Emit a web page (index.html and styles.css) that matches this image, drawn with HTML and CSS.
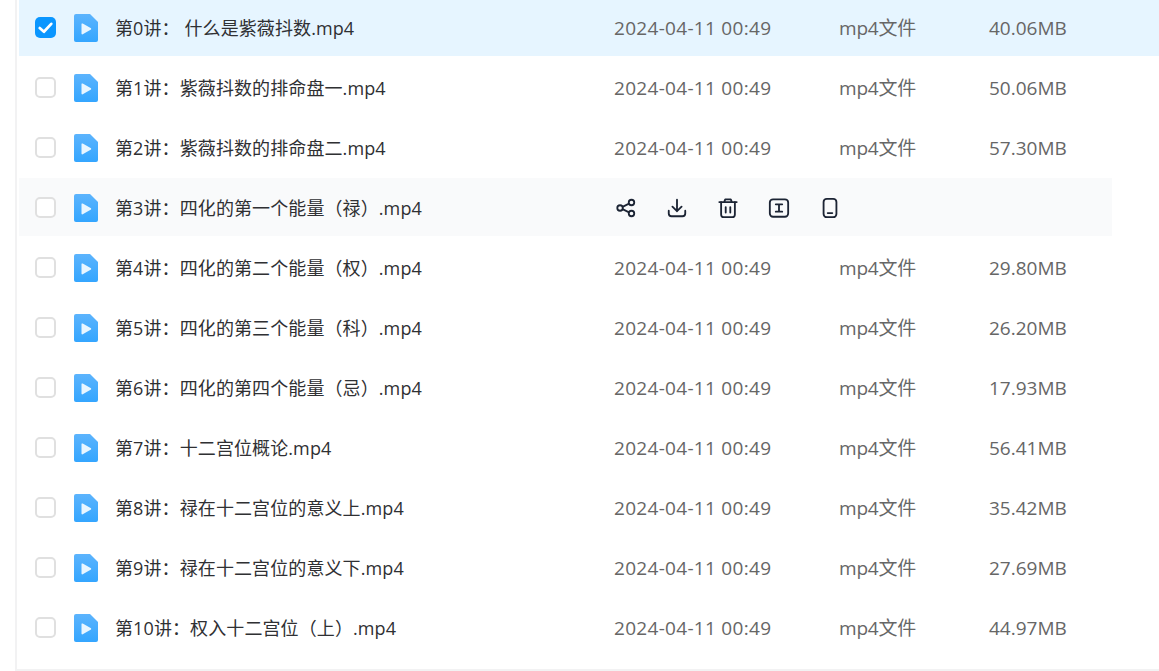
FILE: index.html
```html
<!DOCTYPE html>
<html lang="zh">
<head>
<meta charset="utf-8">
<title>文件列表</title>
<link rel="stylesheet" href="styles.css">
</head>
<body>
<svg class="defs" width="0" height="0" aria-hidden="true">
  <defs>
    <linearGradient id="fg" x1="0" y1="0" x2="0" y2="1">
      <stop offset="0" stop-color="#5cb4fd"/>
      <stop offset="1" stop-color="#34a6ff"/>
    </linearGradient>
    <symbol id="file" viewBox="0 0 24 28">
      <path d="M2 0H16L24 8V26a2 2 0 0 1-2 2H2a2 2 0 0 1-2-2V2a2 2 0 0 1 2-2Z" fill="url(#fg)"/>
      <path d="M7.500 10.200a.8.8 0 0 1 1.200-.7L16.600 14a1 1 0 0 1 0 1.800L8.700 20.300a.8.8 0 0 1-1.200-.7Z" fill="#eaf6ff"/>
    </symbol>
  </defs>
</svg>
<main class="panel">
  <div class="row selected">
    <span class="check on"><svg viewBox="0 0 20 20" width="21" height="21"><path d="M4.500 10.500 8.500 14 15.500 6.500" fill="none" stroke="#fff" stroke-width="2.6" stroke-linecap="round" stroke-linejoin="round"/></svg></span>
    <svg class="ficon"><use href="#file"/></svg>
    <span class="name">第0讲： 什么是紫薇抖数.mp4</span>
    <span class="date">2024-04-11 00:49</span><span class="type">mp4文件</span><span class="size">40.06MB</span>
  </div>
  <div class="row">
    <span class="check"></span><svg class="ficon"><use href="#file"/></svg>
    <span class="name">第1讲：紫薇抖数的排命盘一.mp4</span>
    <span class="date">2024-04-11 00:49</span><span class="type">mp4文件</span><span class="size">50.06MB</span>
  </div>
  <div class="row">
    <span class="check"></span><svg class="ficon"><use href="#file"/></svg>
    <span class="name">第2讲：紫薇抖数的排命盘二.mp4</span>
    <span class="date">2024-04-11 00:49</span><span class="type">mp4文件</span><span class="size">57.30MB</span>
  </div>
  <div class="row hover">
    <span class="check"></span><svg class="ficon"><use href="#file"/></svg>
    <span class="name">第3讲：四化的第一个能量（禄）.mp4</span>
    <div class="actions">
      <svg viewBox="0 0 24 24" class="act"><g fill="none" stroke="#1c2434" stroke-width="2"><circle cx="5.5" cy="12" r="3"/><circle cx="18" cy="6" r="3"/><circle cx="18" cy="18" r="3"/><path d="M8.200 10.700 15.300 7.300M8.200 13.300 15.300 16.700"/></g></svg>
      <svg viewBox="0 0 24 24" class="act"><g fill="none" stroke="#1c2434" stroke-width="2" stroke-linecap="round" stroke-linejoin="round"><path d="M12 3V15.500M7 10.500 12 15.500 17 10.500"/><path d="M3 15V18a3 3 0 0 0 3 3H18a3 3 0 0 0 3-3V15"/></g></svg>
      <svg viewBox="0 0 24 24" class="act"><g fill="none" stroke="#1c2434" stroke-width="2" stroke-linecap="round" stroke-linejoin="round"><path d="M2.500 5.500H21.500M8 5 9 2.500H15L16 5"/><path d="M4.500 5.500V19a3 3 0 0 0 3 3H16.500a3 3 0 0 0 3-3V5.500"/><path d="M9.500 11V17M14.500 11V17"/></g></svg>
      <svg viewBox="0 0 24 24" class="act"><g fill="none" stroke="#1c2434" stroke-width="2" stroke-linecap="round"><rect x="2" y="2.500" width="20" height="19" rx="3.500"/><path d="M8.500 8H15.500M8.500 16H15.500M12 8V16"/></g></svg>
      <svg viewBox="0 0 24 24" class="act"><g fill="none" stroke="#1c2434" stroke-width="2" stroke-linecap="round"><rect x="5" y="2" width="14" height="20" rx="3.500"/><path d="M9.500 17.500H14.500"/></g></svg>
    </div>
  </div>
  <div class="row">
    <span class="check"></span><svg class="ficon"><use href="#file"/></svg>
    <span class="name">第4讲：四化的第二个能量（权）.mp4</span>
    <span class="date">2024-04-11 00:49</span><span class="type">mp4文件</span><span class="size">29.80MB</span>
  </div>
  <div class="row">
    <span class="check"></span><svg class="ficon"><use href="#file"/></svg>
    <span class="name">第5讲：四化的第三个能量（科）.mp4</span>
    <span class="date">2024-04-11 00:49</span><span class="type">mp4文件</span><span class="size">26.20MB</span>
  </div>
  <div class="row">
    <span class="check"></span><svg class="ficon"><use href="#file"/></svg>
    <span class="name">第6讲：四化的第四个能量（忌）.mp4</span>
    <span class="date">2024-04-11 00:49</span><span class="type">mp4文件</span><span class="size">17.93MB</span>
  </div>
  <div class="row">
    <span class="check"></span><svg class="ficon"><use href="#file"/></svg>
    <span class="name">第7讲：十二宫位概论.mp4</span>
    <span class="date">2024-04-11 00:49</span><span class="type">mp4文件</span><span class="size">56.41MB</span>
  </div>
  <div class="row">
    <span class="check"></span><svg class="ficon"><use href="#file"/></svg>
    <span class="name">第8讲：禄在十二宫位的意义上.mp4</span>
    <span class="date">2024-04-11 00:49</span><span class="type">mp4文件</span><span class="size">35.42MB</span>
  </div>
  <div class="row">
    <span class="check"></span><svg class="ficon"><use href="#file"/></svg>
    <span class="name">第9讲：禄在十二宫位的意义下.mp4</span>
    <span class="date">2024-04-11 00:49</span><span class="type">mp4文件</span><span class="size">27.69MB</span>
  </div>
  <div class="row">
    <span class="check"></span><svg class="ficon"><use href="#file"/></svg>
    <span class="name">第10讲：权入十二宫位（上）.mp4</span>
    <span class="date">2024-04-11 00:49</span><span class="type">mp4文件</span><span class="size">44.97MB</span>
  </div>
</main>
</body>
</html>
```
FILE: styles.css
```css
html, body {
  margin: 0;
  padding: 0;
  height: 671px;
  overflow: hidden;
  background: #fff;
}
.defs {
  display: block;
  height: 0;
}
.panel {
  box-sizing: border-box;
  height: 671px;
  margin-left: 15px;
  padding: 0 0 0 2px;
  border-left: 2px solid #f2f2f3;
  border-bottom: 2px solid #f2f2f3;
  font-family: "Open Sans", "Noto Sans CJK SC", sans-serif;
  font-size: 18px;
  display: flex;
  flex-direction: column;
  gap: 2px;
}
.row {
  flex: none;
  height: 58px;
  display: flex;
  align-items: center;
  color: #666;
  width: 1093px;
  box-sizing: border-box;
  padding-left: 16px;
}
.row:first-child {
  margin-top: -2px;
}
.selected {
  width: auto;
  background: #e6f5ff;
}
.hover {
  background: #f9fafb;
}
.check {
  flex: none;
  box-sizing: border-box;
  width: 21px;
  height: 21px;
  border: 2px solid #e0e0e0;
  border-radius: 5px;
  background: #fff;
}
.check.on {
  border: 0;
  background: #0a96ff;
}
.check svg {
  display: block;
}
.ficon {
  flex: none;
  width: 24px;
  height: 28px;
  margin-left: 18px;
  margin-top: 1px;
}
.name {
  flex: none;
  width: 499px;
  margin-left: 17px;
  color: #2f3033;
  letter-spacing: 0.1px;
  white-space: pre;
}
.date, .type, .size {
  flex: none;
  font-size: 19px;
}
.date, .size {
  padding-top: 1px;
}
.date {
  width: 225px;
  letter-spacing: 0.3px;
}
.type {
  width: 150px;
  letter-spacing: -0.2px;
}
.actions {
  display: flex;
  gap: 29px;
  margin-left: 1px;
  padding-top: 1px;
}
.act {
  display: block;
  width: 22px;
  height: 22px;
}
```
